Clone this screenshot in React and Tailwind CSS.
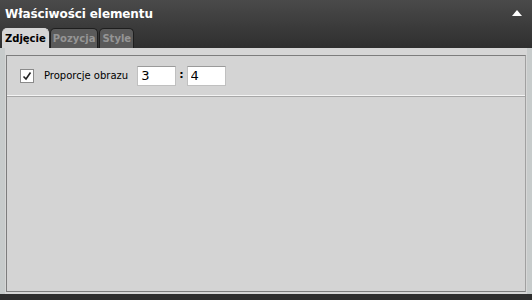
import React, { useState } from 'react';

export default function App() {
  const [keepRatio, setKeepRatio] = useState(true);
  const [tab, setTab] = useState('Zdjęcie');
  const tabs = ['Zdjęcie', 'Pozycja', 'Style'];

  return (
    <div className="w-[532px] h-[300px] bg-[#2e2e2e] flex flex-col overflow-hidden" style={{ fontFamily: '"DejaVu Sans", Verdana, sans-serif' }}>
      {/* title bar */}
      <div className="h-[48px] bg-gradient-to-b from-[#4a4a4a] to-[#2f2f2f] flex flex-col">
        <div className="h-[28px] flex items-center justify-between pl-[5px] pr-[10px]">
          <span className="text-white font-bold text-[12px] tracking-[-0.1px]">Właściwości elementu</span>
          <svg width="10" height="6" viewBox="0 0 10 6" className="mt-[-2px]">
            <path d="M0 6 L5 0 L10 6 Z" fill="#ffffff" />
          </svg>
        </div>
        <div className="flex items-end pl-[2px] gap-[1px] h-[20px] mt-auto">
          {tabs.map(t => (
            <button
              key={t}
              onClick={() => setTab(t)}
              className={
                'h-[20px] px-[2px] rounded-t-[5px] text-[10px] font-bold leading-none border border-b-0 ' +
                (tab === t
                  ? 'bg-[#d6d6d6] text-black border-[#d6d6d6]'
                  : 'bg-[#5a5a5a] text-[#959595] border-[#1e1e1e]')
              }
            >
              {t}
            </button>
          ))}
        </div>
      </div>

      {/* panel */}
      <div className="h-[246px] bg-[#d6d6d6] border-l-[5px] border-l-[#c7cbcb] border-r-[5px] border-r-[#c7cbcb] px-[1px] pt-[7px] pb-[2px] flex">
        <div className="flex-1 border border-[#7d7d7d] border-r-[#a0a0a0] bg-[#d4d4d4] flex flex-col">
          <div className="flex items-center h-[40px] pl-[13px] border-b border-b-[#f4f4f4]">
            <button
              onClick={() => setKeepRatio(!keepRatio)}
              className="w-[14px] h-[14px] bg-white border border-[#8a8a8a] flex items-center justify-center"
            >
              {keepRatio && (
                <svg width="10" height="10" viewBox="0 0 10 10">
                  <path d="M1.5 5.5 L4 8 L8.5 1.5" stroke="#222" strokeWidth="1.6" fill="none" />
                </svg>
              )}
            </button>
            <span className="ml-[10px] text-[10px] text-black">Proporcje obrazu</span>
            <input
              defaultValue="3"
              className="ml-[9px] w-[39px] h-[20px] bg-white border border-[#c0c0c0] border-t-[#9a9a9a] px-[3px] text-[13px] text-black outline-none"
            />
            <span className="mx-[3px] text-[11px] font-bold text-black">:</span>
            <input
              defaultValue="4"
              className="w-[39px] h-[20px] bg-white border border-[#c0c0c0] border-t-[#9a9a9a] px-[3px] text-[13px] text-black outline-none"
            />
          </div>
          <div className="flex-1 border-t border-t-[#a8a8a8]" />
        </div>
      </div>
    </div>
  );
}
